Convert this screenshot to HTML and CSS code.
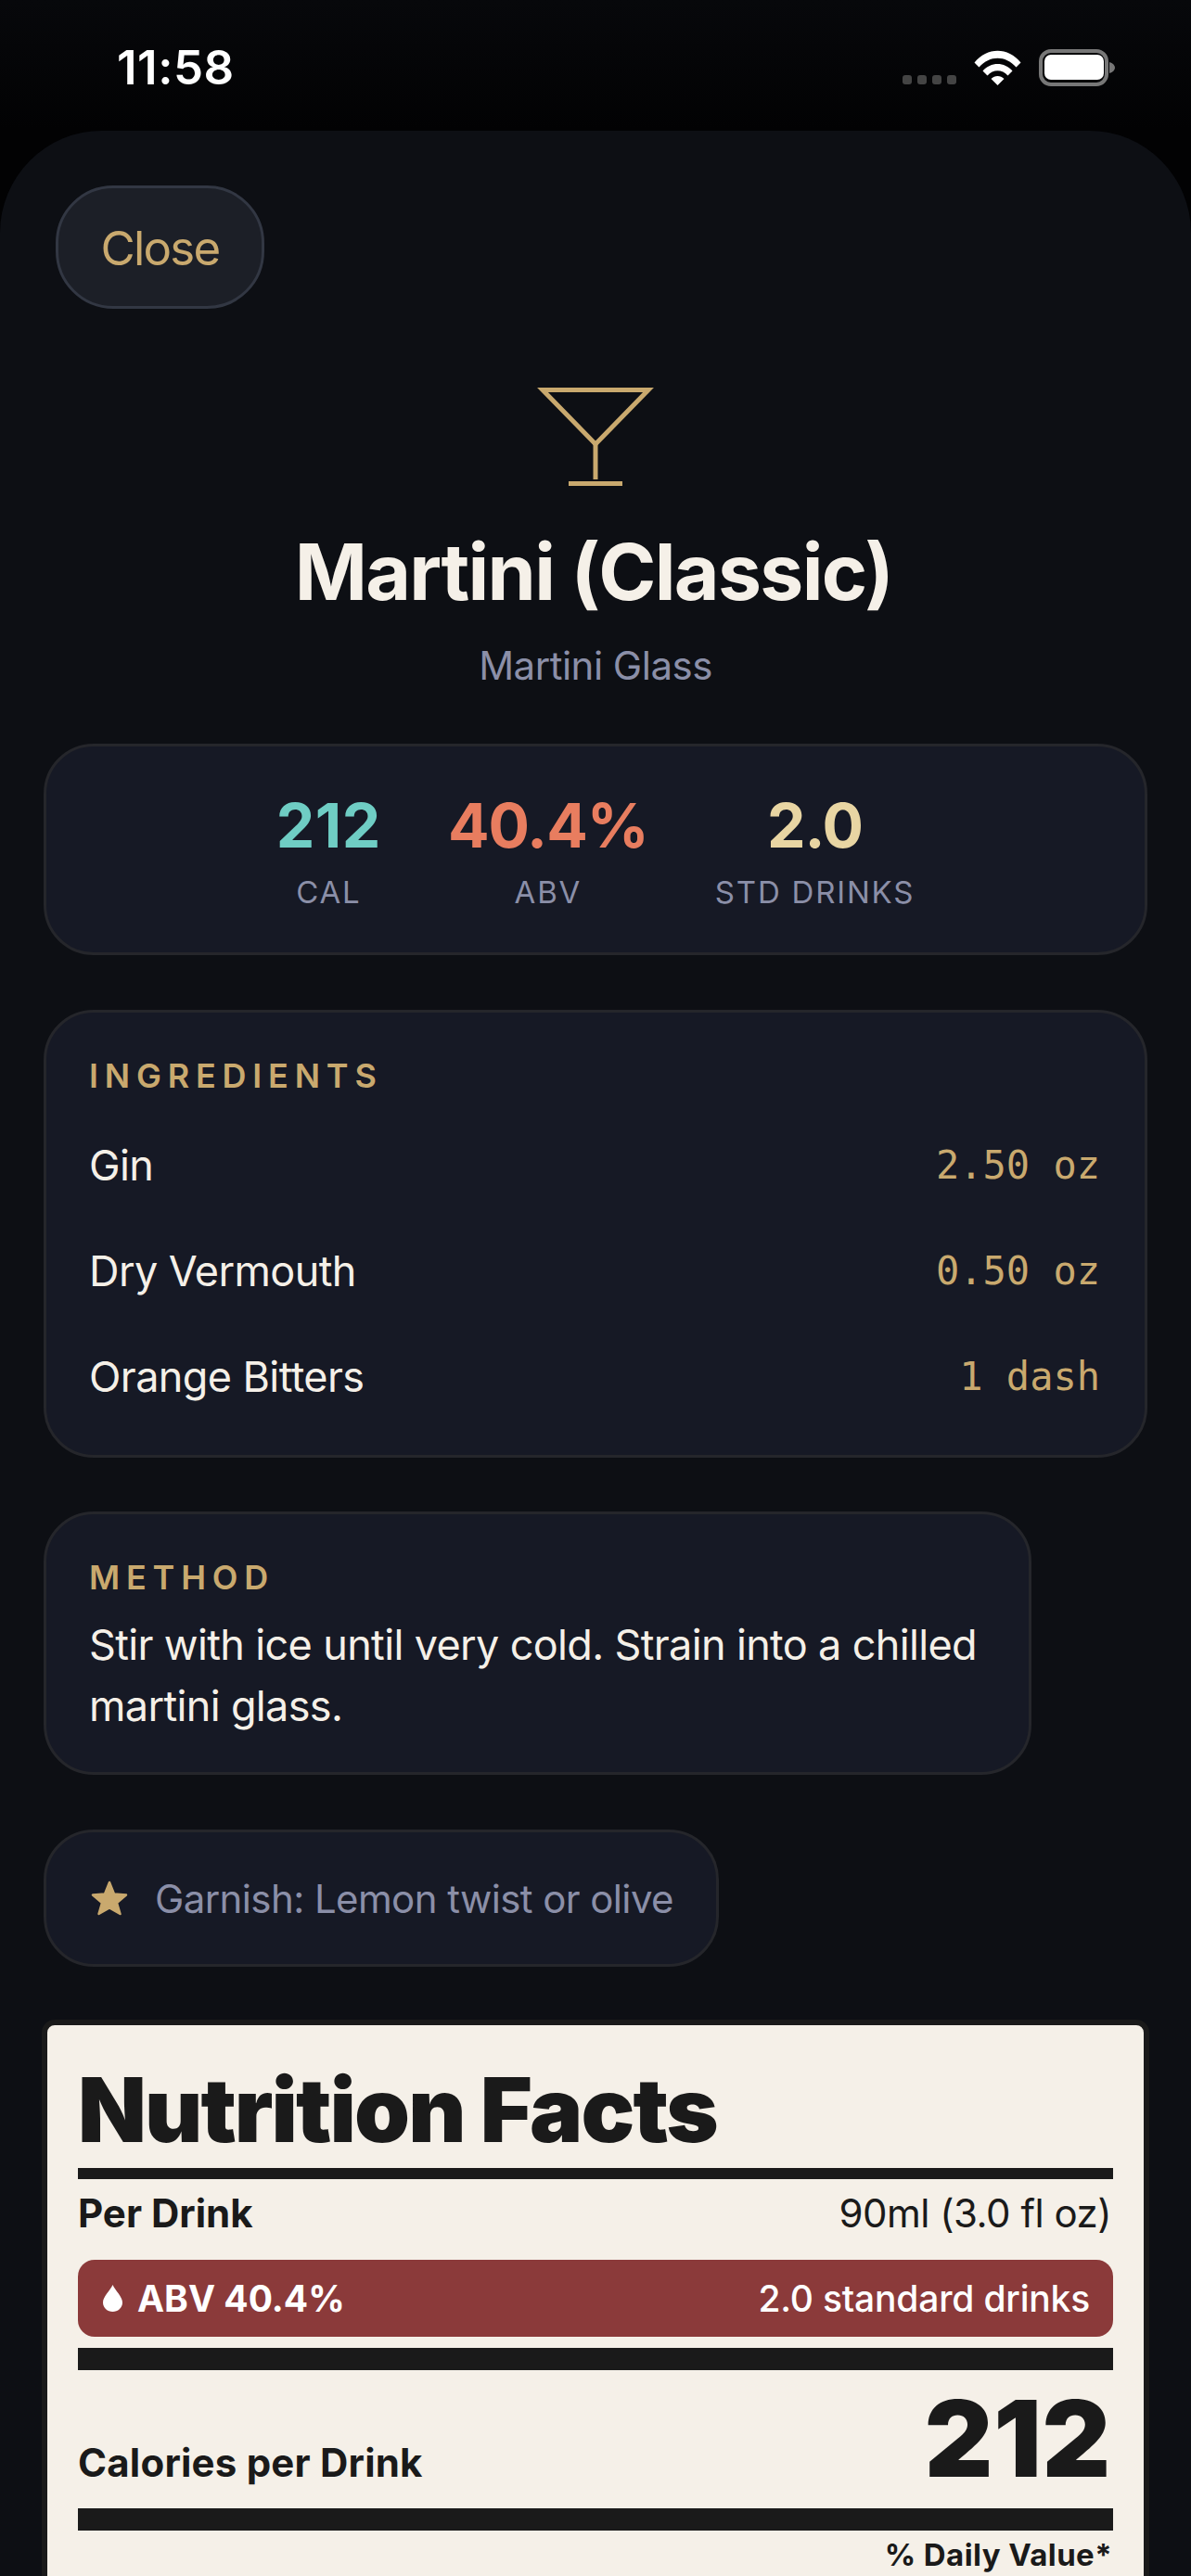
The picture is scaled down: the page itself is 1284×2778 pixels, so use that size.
FILE: index.html
```html
<!DOCTYPE html>
<html lang="en">
<head>
    <meta charset="UTF-8">
    <meta name="viewport" content="width=device-width, initial-scale=1.0">
    <title>Martini (Classic)</title>
    <link rel="stylesheet" href="styles.css">
</head>
<body>

    <div class="status-bar">
        <span class="clock">11:58</span>
        <div class="status-icons">
            <div class="signal"><i></i><i></i><i></i><i></i></div>
            <svg class="wifi" width="51" height="38" viewBox="0 0 51 38">
                <path d="M0.5 13.5 C14 -3.5 37 -3.5 50.5 13.5 L45.5 18.5 C34 5.5 17 5.5 5.5 18.5 Z" fill="#fff"/>
                <path d="M9.5 22.5 C18 12.5 33 12.5 41.5 22.5 L36.5 27.5 C30.5 20.5 20.5 20.5 14.5 27.5 Z" fill="#fff"/>
                <path d="M18.5 31 C22.5 27 28.5 27 32.5 31 L25.5 38 Z" fill="#fff"/>
            </svg>
            <svg class="battery" width="82" height="40" viewBox="0 0 82 40">
                <rect x="2" y="2" width="71" height="36" rx="11" fill="none" stroke="#777" stroke-width="4"/>
                <rect x="6" y="6" width="64" height="27" rx="7" fill="#fff"/>
                <path d="M76 14 C80 15 82 17.500 82 20 C82 22.500 80 25 76 26 Z" fill="#777"/>
            </svg>
        </div>
    </div>

    <div class="sheet">
        <button class="close-btn">Close</button>

        <div class="drink-head">
            <svg class="glass" width="126" height="106" viewBox="0 0 126 106">
                <path d="M6 2.500 H120 L63 61 Z" fill="none" stroke="#c9a96e" stroke-width="5"/>
                <path d="M63 60 V99" stroke="#c9a96e" stroke-width="5"/>
                <rect x="34" y="101" width="58" height="5" fill="#c9a96e"/>
            </svg>
            <h1 class="drink-name">Martini (Classic)</h1>
            <p class="drink-glass">Martini Glass</p>
        </div>

        <div class="card stats">
            <div class="stat">
                <span class="stat-value teal">212</span>
                <span class="stat-label">CAL</span>
            </div>
            <div class="stat">
                <span class="stat-value coral">40.4%</span>
                <span class="stat-label">ABV</span>
            </div>
            <div class="stat">
                <span class="stat-value sand">2.0</span>
                <span class="stat-label">STD DRINKS</span>
            </div>
        </div>

        <div class="card ingredients">
            <h2 class="card-title">INGREDIENTS</h2>
            <div class="ingredient"><span>Gin</span><span class="amount">2.50 oz</span></div>
            <div class="ingredient"><span>Dry Vermouth</span><span class="amount">0.50 oz</span></div>
            <div class="ingredient"><span>Orange Bitters</span><span class="amount">1 dash</span></div>
        </div>

        <div class="card method">
            <h2 class="card-title">METHOD</h2>
            <p class="method-text">Stir with ice until very cold. Strain into a chilled martini glass.</p>
        </div>

        <div class="card garnish">
            <svg width="40" height="38" viewBox="0 0 40 38">
                <path d="M20 2 L25 14.500 L38 15.500 L28 24 L31.500 36 L20 29.500 L8.500 36 L12 24 L2 15.500 L15 14.500 Z" fill="#c9a96e" stroke="#c9a96e" stroke-width="2.500" stroke-linejoin="round"/>
            </svg>
            <span>Garnish: Lemon twist or olive</span>
        </div>

        <div class="label">
            <div class="label-title">Nutrition Facts</div>
            <div class="rule rule-thin"></div>
            <div class="serving">
                <strong>Per Drink</strong>
                <span>90ml (3.0 fl oz)</span>
            </div>
            <div class="abv-bar">
                <span class="abv-left">
                    <svg width="21" height="29" viewBox="0 0 21 29">
                        <path d="M10.500 0 C13 6 21 12.500 21 19 C21 25 16 29 10.500 29 C5 29 0 25 0 19 C0 12.500 8 6 10.500 0 Z" fill="#fff"/>
                    </svg>
                    ABV 40.4%
                </span>
                <span class="abv-right">2.0 standard drinks</span>
            </div>
            <div class="rule rule-thick rule-abv"></div>
            <div class="calories">
                <strong>Calories per Drink</strong>
                <span class="calories-num">212</span>
            </div>
            <div class="rule rule-thick"></div>
            <div class="daily">% Daily Value*</div>
        </div>
    </div>

</body>
</html>
```

FILE: styles.css
```css
* {
    box-sizing: border-box;
}
html, body {
    margin: 0;
    height: 2778px;
    overflow: hidden;
}
body {
    font-family: Inter, "Noto Sans", sans-serif;
    background: linear-gradient(#07080b, #020203 140px);
    color: #f5f0e8;
}
h1, h2, p {
    margin: 0;
}

/* status bar */
.status-bar {
    height: 141px;
    display: flex;
    justify-content: space-between;
    padding: 53px 82px 0 126px;
}
.clock {
    font-size: 51px;
    font-weight: 600;
    line-height: 40px;
    letter-spacing: 0.5px;
    color: #fff;
}
.status-icons {
    display: flex;
    align-items: flex-start;
}
.signal {
    display: flex;
    gap: 6px;
    margin-top: 28px;
    margin-right: 19px;
}
.signal i {
    width: 10px;
    height: 10px;
    border-radius: 3px;
    background: #444;
}
.wifi {
    margin-top: 1px;
    margin-right: 19px;
}

/* sheet */
.sheet {
    height: 2637px;
    padding: 59px 47px 0;
    background: #0d0f14;
    border-radius: 110px 110px 0 0;
}
.close-btn {
    display: block;
    width: 225px;
    height: 133px;
    margin-left: 13px;
    padding: 2px 0 0;
    font-family: inherit;
    font-size: 51px;
    letter-spacing: -1.8px;
    color: #c9a96e;
    background: #1c1f27;
    border: 3px solid #323743;
    border-radius: 62px;
}
.drink-head {
    display: flex;
    flex-direction: column;
    align-items: center;
    margin-top: 85px;
}
.glass {
    display: block;
}
.drink-name {
    margin-top: 43px;
    margin-right: 4px;
    font-size: 84px;
    font-weight: 700;
    line-height: 100px;
    letter-spacing: -1.7px;
}
.drink-glass {
    margin-top: 26px;
    font-size: 42px;
    line-height: 50px;
    letter-spacing: -0.5px;
    color: #8b8fa8;
}

/* cards */
.card {
    background: #161925;
    border: 3px solid #25262b;
    border-radius: 54px;
}
.card-title {
    font-size: 36px;
    font-weight: 600;
    line-height: 40px;
    letter-spacing: 6.8px;
    color: #c9a96e;
}
.stats {
    display: flex;
    justify-content: center;
    gap: 72px;
    margin-top: 59px;
    padding: 45px 48px;
}
.stat {
    display: flex;
    flex-direction: column;
    align-items: center;
}
.stat-value {
    font-size: 66px;
    font-weight: 700;
    line-height: 80px;
    letter-spacing: -1px;
}
.stat-label {
    margin-top: 12px;
    font-size: 33px;
    line-height: 40px;
    letter-spacing: 1.8px;
    color: #8b8fa8;
}
.teal {
    color: #6fcdc4;
    letter-spacing: 0.5px;
}
.coral {
    color: #e87d5f;
}
.sand {
    color: #e8d5a3;
}
.ingredients {
    margin-top: 59px;
    padding: 48px 48px 28px 46px;
}
.ingredients .card-title {
    margin-bottom: 19px;
}
.ingredient {
    display: flex;
    justify-content: space-between;
    align-items: center;
    height: 114px;
    font-size: 45px;
    letter-spacing: -0.6px;
}
.amount {
    font-family: "DejaVu Sans Mono", "Liberation Mono", monospace;
    font-size: 42px;
    letter-spacing: 0;
    color: #c9a96e;
}
.method {
    width: 1065px;
    margin-top: 58px;
    padding: 48px 48px 38px 46px;
}
.method-text {
    margin-top: 20px;
    font-size: 45px;
    line-height: 66px;
    letter-spacing: -0.65px;
}
.garnish {
    display: flex;
    align-items: center;
    gap: 29px;
    width: fit-content;
    height: 148px;
    margin-top: 59px;
    padding: 0 46px 0 48px;
    font-size: 42px;
    letter-spacing: -0.6px;
    color: #8b8fa8;
}

/* nutrition label */
.label {
    height: 700px;
    margin: 57px -2px 0;
    padding: 37px 33px 0;
    color: #1a1a1a;
    background: #f5f0e8;
    border: 6px solid #1a1a1a;
    border-radius: 14px;
}
.label-title {
    font-size: 96px;
    font-weight: 900;
    line-height: 108px;
    letter-spacing: -1.9px;
}
.rule {
    background: #1a1a1a;
}
.rule-thin {
    height: 12px;
    margin-top: 9px;
}
.rule-thick {
    height: 24px;
}
.rule-abv {
    margin-top: 12px;
}
.serving {
    display: flex;
    justify-content: space-between;
    margin-top: 7px;
    padding-right: 2px;
    font-size: 42px;
    line-height: 60px;
    letter-spacing: -0.5px;
}
.serving strong {
    font-weight: 700;
    letter-spacing: 0;
}
.abv-bar {
    display: flex;
    justify-content: space-between;
    align-items: center;
    height: 83px;
    margin-top: 20px;
    padding: 0 25px 0 27px;
    font-size: 39px;
    color: #fff;
    background: #8b3a3a;
    border-radius: 18px;
}
.abv-left {
    display: flex;
    align-items: center;
    gap: 16px;
    font-weight: 700;
}
.abv-right {
    font-weight: 500;
    letter-spacing: -0.2px;
}
.calories {
    display: flex;
    justify-content: space-between;
    align-items: baseline;
    height: 149px;
    padding: 17px 2px 0 0;
}
.calories strong {
    font-size: 42px;
    font-weight: 700;
    letter-spacing: 0.2px;
}
.calories-num {
    font-size: 114px;
    font-weight: 900;
    line-height: 114px;
    letter-spacing: 0.8px;
}
.daily {
    margin-top: 6px;
    padding-right: 1px;
    font-size: 33px;
    font-weight: 700;
    line-height: 40px;
    letter-spacing: 0.4px;
    text-align: right;
}
```
